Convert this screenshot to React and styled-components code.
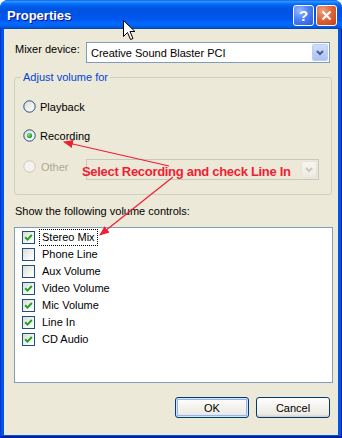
import React from 'react';
import styled, { createGlobalStyle } from 'styled-components';

const GlobalStyle = createGlobalStyle`
  html, body {
    margin: 0;
    padding: 0;
    background: #ffffff;
  }
  body {
    font-family: "Liberation Sans", Arial, sans-serif;
    font-size: 11px;
    color: #000000;
  }
  * {
    box-sizing: border-box;
  }
`;

const Window = styled.div`
  position: relative;
  width: 342px;
  height: 438px;
  display: flex;
  flex-direction: column;
  border-radius: 8px 8px 0 0;
  overflow: hidden;
  background: #0055ea;
`;

const TitleBar = styled.div`
  height: 29px;
  flex: none;
  display: flex;
  align-items: flex-start;
  gap: 2px;
  padding: 5px 5px 0 7px;
  background: linear-gradient(
    to bottom,
    #0058ee 0%,
    #3593ff 4%,
    #288eff 7%,
    #127dff 10%,
    #036ffc 14%,
    #0262ee 20%,
    #0057e5 28%,
    #0054e3 36%,
    #0055eb 60%,
    #005bf5 70%,
    #026afe 80%,
    #0062ef 90%,
    #0052d6 96%,
    #0040ab 100%
  );
`;

const Title = styled.div`
  flex: 1;
  font: bold 13px "Liberation Sans", Arial, sans-serif;
  line-height: 21px;
  color: #ffffff;
  text-shadow: 1px 1px #0f1089;
`;

const CaptionButton = styled.div`
  width: 21px;
  height: 21px;
  border: 1px solid #ffffff;
  border-radius: 3px;
  display: flex;
  align-items: center;
  justify-content: center;
  color: #ffffff;
  font: bold 15px "Liberation Sans", Arial, sans-serif;
  background: ${(p) =>
    p.$close
      ? 'radial-gradient(circle at 30% 25%, #f0a080 0%, #e0673c 45%, #c63d12 100%)'
      : 'radial-gradient(circle at 30% 25%, #9ab9ff 0%, #4f82f6 45%, #2457d8 100%)'};
`;

const Frame = styled.div`
  flex: 1;
  display: flex;
  padding: 0 4px 3px;
  background: #0055e5;
  box-shadow: inset 1px 0 #0831d9, inset -1px 0 #001ea0, inset 0 -2px #001ea0;
`;

const Content = styled.div`
  flex: 1;
  display: flex;
  flex-direction: column;
  padding: 13px 6px 0 10px;
  background: #ece9d8;
`;

const MixerRow = styled.div`
  display: flex;
  align-items: flex-start;
  height: 21px;
`;

const Label = styled.div`
  line-height: 14px;
  margin-left: 1px;
  color: ${(p) => (p.$disabled ? '#aca899' : '#000000')};
`;

const Combo = styled.div`
  width: ${(p) => p.$width}px;
  height: 21px;
  margin-left: ${(p) => (p.$auto ? 'auto' : '0')};
  margin-right: ${(p) => (p.$auto ? '2px' : '0')};
  margin-top: ${(p) => p.$top || 0}px;
  display: flex;
  align-items: center;
  padding: 0 1px 0 4px;
  border: 1px solid ${(p) => (p.$disabled ? '#c9c7ba' : '#7f9db9')};
  background: ${(p) => (p.$disabled ? '#ece9d8' : '#ffffff')};
`;

const ComboText = styled.div`
  flex: 1;
  white-space: nowrap;
`;

const ComboButton = styled.div`
  width: 16px;
  height: 17px;
  border-radius: 2px;
  display: flex;
  align-items: center;
  justify-content: center;
  border: 1px solid ${(p) => (p.$disabled ? '#e6e4da' : '#bccdf9')};
  background: ${(p) =>
    p.$disabled
      ? 'linear-gradient(#f6f5f0, #ecebe3)'
      : 'linear-gradient(#d2def9, #b9cbf7 60%, #aec3f4)'};
`;

const GroupBox = styled.fieldset`
  margin: 8px 0 0 0;
  padding: 14px 10px 14px 6px;
  border: 1px solid #d0d0bf;
  border-radius: 3px;
  min-width: 0;
`;

const Legend = styled.legend`
  padding: 0 2px;
  line-height: 13px;
  color: #0046d5;
`;

const RadioRow = styled.div`
  display: flex;
  align-items: ${(p) => (p.$top ? 'flex-start' : 'center')};
  height: ${(p) => (p.$top ? 22 : 17)}px;
  margin-top: ${(p) => p.$gap}px;
  padding-left: 2px;
`;

const RadioItem = styled.div`
  display: flex;
  align-items: center;
  gap: 4px;
  height: 13px;
  margin-top: ${(p) => p.$top || 0}px;
  width: ${(p) => (p.$width ? `${p.$width}px` : 'auto')};
`;

const SectionLabel = styled.div`
  margin: 10px 0 9px 1px;
  line-height: 13px;
`;

const ListBox = styled.div`
  height: 156px;
  margin-right: -1px;
  border: 1px solid #7f9db9;
  background: #ffffff;
  padding: 1px 0 0 7px;
`;

const CheckRow = styled.div`
  display: flex;
  align-items: center;
  height: 17px;
`;

const CheckBox = styled.div`
  width: 13px;
  height: 13px;
  border: 1px solid #1c5180;
  display: flex;
  align-items: center;
  justify-content: center;
  background: linear-gradient(135deg, #dcdcd7 0%, #f4f4f0 60%, #ffffff 100%);
`;

const CheckLabel = styled.div`
  margin-left: 4px;
  padding: 0 2px;
  height: 17px;
  line-height: 15px;
  border: 1px dotted ${(p) => (p.$focus ? '#000000' : 'transparent')};
`;

const ButtonRow = styled.div`
  display: flex;
  justify-content: flex-end;
  gap: 7px;
  margin: 14px 2px 0 0;
`;

const Button = styled.div`
  width: 74px;
  height: 21px;
  border: 1px solid #003c74;
  border-radius: 3px;
  display: flex;
  align-items: center;
  justify-content: center;
  background: linear-gradient(#ffffff, #f3f2ec 50%, #ecebe6 85%, #d6d0c5);
  box-shadow: ${(p) =>
    p.$default
      ? 'inset 0 0 0 1px #cee7ff, inset 0 0 0 2px #98b4ee'
      : 'inset 0 -1px #d6d0c5'};
`;

const Annotation = styled.div`
  position: absolute;
  left: 82px;
  top: 164px;
  font: bold 13px "Liberation Sans", Arial, sans-serif;
  letter-spacing: -0.3px;
  line-height: 15px;
  color: #f01e32;
  white-space: nowrap;
  pointer-events: none;
`;

const Overlay = styled.svg`
  position: absolute;
  left: 0;
  top: 0;
  pointer-events: none;
`;

const Cursor = styled.svg`
  position: absolute;
  left: 123px;
  top: 20px;
  pointer-events: none;
`;

const Chevron = ({ color }) => (
  <svg width="8" height="6" viewBox="0 0 8 6">
    <path d="M1 1 L4 4 L7 1" fill="none" stroke={color} strokeWidth="2" />
  </svg>
);

const Radio = ({ checked, disabled }) => (
  <svg width="13" height="13" viewBox="0 0 13 13">
    <defs>
      <linearGradient id="rg" x1="0" y1="0" x2="1" y2="1">
        <stop offset="0" stopColor="#dcdcd4" />
        <stop offset="1" stopColor="#ffffff" />
      </linearGradient>
      <radialGradient id="dot" cx="0.35" cy="0.35" r="0.7">
        <stop offset="0" stopColor="#7de27d" />
        <stop offset="1" stopColor="#1b9a1b" />
      </radialGradient>
    </defs>
    <circle
      cx="6.5"
      cy="6.5"
      r="5.7"
      fill={disabled ? '#f4f3ee' : 'url(#rg)'}
      stroke={disabled ? '#cac8bb' : '#1c5180'}
      strokeWidth="1"
    />
    {checked && <circle cx="6.5" cy="6.5" r="2.6" fill="url(#dot)" />}
  </svg>
);

const Check = () => (
  <svg width="9" height="9" viewBox="0 0 9 9">
    <path d="M1.2 4.2 L3.5 6.6 L7.8 2" fill="none" stroke="#21a121" strokeWidth="2" />
  </svg>
);

const controls = [
  { name: 'Stereo Mix', on: true, focus: true },
  { name: 'Phone Line', on: false },
  { name: 'Aux Volume', on: false },
  { name: 'Video Volume', on: true },
  { name: 'Mic Volume', on: true },
  { name: 'Line In', on: true },
  { name: 'CD Audio', on: true },
];

const App = () => (
  <>
    <GlobalStyle />
    <Window>
      <TitleBar>
        <Title>Properties</Title>
        <CaptionButton>?</CaptionButton>
        <CaptionButton $close>
          <svg width="11" height="11" viewBox="0 0 11 11">
            <path d="M1.5 1.5 L9.5 9.5 M9.5 1.5 L1.5 9.5" stroke="#ffffff" strokeWidth="2.2" />
          </svg>
        </CaptionButton>
      </TitleBar>
      <Frame>
        <Content>
          <MixerRow>
            <Label>Mixer device:</Label>
            <Combo $width={244} $auto>
              <ComboText>Creative Sound Blaster PCI</ComboText>
              <ComboButton>
                <Chevron color="#4d6185" />
              </ComboButton>
            </Combo>
          </MixerRow>

          <GroupBox>
            <Legend>Adjust volume for</Legend>
            <RadioRow $gap={0}>
              <RadioItem>
                <Radio />
                <span>Playback</span>
              </RadioItem>
            </RadioRow>
            <RadioRow $gap={12}>
              <RadioItem>
                <Radio checked />
                <span>Recording</span>
              </RadioItem>
            </RadioRow>
            <RadioRow $gap={14} $top>
              <RadioItem $top={2} $width={63}>
                <Radio disabled />
                <Label $disabled>Other</Label>
              </RadioItem>
              <Combo $width={233} $top={1} $disabled>
                <ComboText />
                <ComboButton $disabled>
                  <Chevron color="#c9c7ba" />
                </ComboButton>
              </Combo>
            </RadioRow>
          </GroupBox>

          <SectionLabel>Show the following volume controls:</SectionLabel>
          <ListBox>
            {controls.map((c) => (
              <CheckRow key={c.name}>
                <CheckBox>{c.on && <Check />}</CheckBox>
                <CheckLabel $focus={c.focus}>{c.name}</CheckLabel>
              </CheckRow>
            ))}
          </ListBox>

          <ButtonRow>
            <Button $default>OK</Button>
            <Button>Cancel</Button>
          </ButtonRow>
        </Content>
      </Frame>

      <Annotation>Select Recording and check Line In</Annotation>
      <Overlay width="342" height="438">
        <defs>
          <marker id="head" markerWidth="10" markerHeight="8" refX="9" refY="4" orient="auto" markerUnits="userSpaceOnUse">
            <path d="M0 0 L10 4 L0 8 Z" fill="#f01e32" />
          </marker>
        </defs>
        <line x1="169" y1="166" x2="64" y2="142" stroke="#f01e32" strokeWidth="1.2" markerEnd="url(#head)" />
        <line x1="173" y1="177" x2="100" y2="235" stroke="#f01e32" strokeWidth="1.2" markerEnd="url(#head)" />
      </Overlay>
      <Cursor width="13" height="22" viewBox="0 0 13 22">
        <path
          d="M0.5 0.5 L0.5 16.5 L4.5 12.5 L7.5 19.5 L10 18.5 L7 11.5 L12 11.5 Z"
          fill="#ffffff"
          stroke="#000000"
          strokeWidth="1"
          strokeLinejoin="miter"
        />
      </Cursor>
    </Window>
  </>
);

export default App;
